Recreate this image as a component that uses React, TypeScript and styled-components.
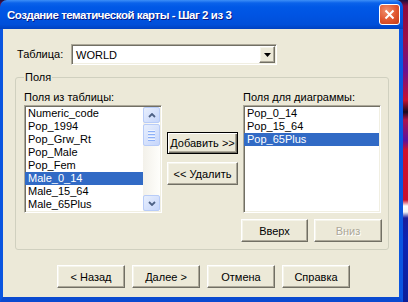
import styled, { createGlobalStyle, css } from "styled-components";

const GlobalStyle = createGlobalStyle`
  html, body {
    margin: 0;
    padding: 0;
  }
  body {
    width: 408px;
    height: 302px;
    overflow: hidden;
    font-family: "Liberation Sans", Arial, sans-serif;
    background: linear-gradient(
      to bottom,
      #1a1040 0px,
      #8a0d3f 6px,
      #9b0f48 40px,
      #6b1190 70px,
      #c8102e 100px,
      #1a0a20 112px,
      #b0124a 120px,
      #5a10a0 140px,
      #d0122c 150px,
      #c8102e 200px,
      #ffffff 206px,
      #f4f4f4 212px,
      #1b1c9a 218px,
      #0a24b5 240px,
      #0a1f9a 302px
    );
  }
`;

const raised = css`
  border: 1px solid;
  border-color: #ffffff #716f64 #716f64 #ffffff;
  box-shadow: inset -1px -1px 0 #aca899, inset 1px 1px 0 #f5f4ea;
`;

const sunken = css`
  border: 1px solid;
  border-color: #aca899 #ffffff #ffffff #aca899;
  box-shadow: inset 1px 1px 0 #716f64, inset -1px -1px 0 #f1efe2;
`;

const Window = styled.div`
  width: 403px;
  height: 302px;
  display: flex;
  flex-direction: column;
`;

const TitleBar = styled.div`
  height: 29px;
  flex: none;
  display: flex;
  align-items: center;
  justify-content: space-between;
  padding: 0 3px 0 7px;
  border-radius: 7px 7px 0 0;
  background: linear-gradient(
    to bottom,
    #3d8ff7 0px,
    #0a62ea 3px,
    #0058e6 7px,
    #0054e3 50%,
    #004fd9 85%,
    #0041c0 100%
  );
`;

const TitleText = styled.span`
  color: #ffffff;
  font-family: "Liberation Sans", Arial, sans-serif;
  font-weight: bold;
  font-size: 11.5px;
  letter-spacing: -0.45px;
  text-shadow: 1px 1px 0 #0a1883;
  padding-top: 1px;
`;

const CloseButton = styled.div`
  width: 21px;
  height: 21px;
  box-sizing: border-box;
  border: 1px solid #ffffff;
  border-radius: 3px;
  background: radial-gradient(circle at 35% 30%, #f0906e 0%, #e0552e 55%, #c43c18 100%);
  display: flex;
  align-items: center;
  justify-content: center;
`;

const Frame = styled.div`
  flex: 1;
  display: flex;
  flex-direction: column;
  background: #ece9d8;
  border-left: 3px solid #0a55e0;
  border-right: 4px solid #0a55e0;
  border-bottom: 5px solid #0a4ad0;
  font-size: 11px;
  color: #000000;
`;

const TableRow = styled.div`
  display: flex;
  align-items: center;
  padding: 15px 0 0 14px;
`;

const Label = styled.span<{ $width?: number }>`
  width: ${({ $width }) => ($width ? `${$width}px` : "auto")};
  line-height: 13px;
  white-space: nowrap;
`;

const Combo = styled.div`
  width: 206px;
  height: 21px;
  box-sizing: border-box;
  ${sunken};
  background: #ffffff;
  display: flex;
  align-items: center;
  justify-content: space-between;
  padding: 0 1px 0 4px;
`;

const ComboArrow = styled.div`
  width: 16px;
  height: 17px;
  box-sizing: border-box;
  ${raised};
  background: #ece9d8;
  display: flex;
  align-items: center;
  justify-content: center;
`;

const Group = styled.fieldset`
  width: 374px;
  box-sizing: border-box;
  margin: 6px 0 0 12px;
  padding: 7px 7px 7px 8px;
  border: 1px solid #d0d0bf;
  border-radius: 3px;
  min-inline-size: 0;
`;

const Legend = styled.legend`
  padding: 0 1px;
  line-height: 13px;
`;

const Columns = styled.div`
  display: grid;
  grid-template-columns: 138px 71px 138px;
  grid-template-rows: 13px 108px;
  column-gap: 5px;
  row-gap: 1px;
`;

const ListBox = styled.div`
  height: 108px;
  box-sizing: border-box;
  ${sunken};
  background: #ffffff;
  display: flex;
  padding: 1px 1px 1px 0;
`;

const Items = styled.div`
  flex: 1;
  overflow: hidden;
`;

const Item = styled.div<{ $selected?: boolean }>`
  height: 13px;
  line-height: 13px;
  padding-left: 3px;
  white-space: nowrap;
  background: ${({ $selected }) => ($selected ? "#316ac5" : "transparent")};
  color: ${({ $selected }) => ($selected ? "#ffffff" : "#000000")};
`;

const ScrollBar = styled.div`
  width: 17px;
  display: flex;
  flex-direction: column;
  background: linear-gradient(to right, #f3f1ea, #fefefb);
`;

const ScrollButton = styled.div<{ $grow?: boolean }>`
  height: ${({ $grow }) => ($grow ? "22px" : "16px")};
  box-sizing: border-box;
  border: 1px solid #b8ccf8;
  border-radius: 2px;
  background: linear-gradient(135deg, #e8effd 0%, #c6d6fb 100%);
  display: flex;
  flex-direction: column;
  align-items: center;
  justify-content: center;
  gap: 1px;
`;

const Track = styled.div`
  flex: 1;
  display: flex;
  flex-direction: column;
  padding-top: 1px;
`;

const Grip = styled.span`
  width: 7px;
  height: 1px;
  background: #eef4fe;
  border-bottom: 1px solid #8cb0f8;
`;

const MiddleColumn = styled.div`
  display: flex;
  flex-direction: column;
  gap: 8px;
  padding-top: 27px;
`;

const Button = styled.button<{ $width?: number; $default?: boolean }>`
  width: ${({ $width }) => $width ?? 67}px;
  height: ${({ $default }) => ($default ? 22 : 23)}px;
  box-sizing: border-box;
  padding: 0;
  margin: 0;
  font-family: "Liberation Sans", Arial, sans-serif;
  font-size: 11px;
  color: #000000;
  background: #ece9d8;
  white-space: nowrap;
  ${({ $default }) =>
    $default
      ? css`
          border: 1px solid #000000;
          box-shadow: inset 1px 1px 0 #ffffff, inset -1px -1px 0 #716f64,
            inset -2px -2px 0 #aca899;
        `
      : raised};
  &:disabled {
    color: #aca899;
    text-shadow: 1px 1px 0 #ffffff;
  }
`;

const MoveRow = styled.div`
  display: flex;
  justify-content: flex-end;
  gap: 6px;
  margin: 6px -1px 0 0;
`;

const FooterRow = styled.div`
  display: flex;
  gap: 7px;
  padding: 15px 0 0 54px;
`;

const sourceFields = [
  "Numeric_code",
  "Pop_1994",
  "Pop_Grw_Rt",
  "Pop_Male",
  "Pop_Fem",
  "Male_0_14",
  "Male_15_64",
  "Male_65Plus",
];
const chartFields = ["Pop_0_14", "Pop_15_64", "Pop_65Plus"];

function Chevron({ up }: { up?: boolean }) {
  return (
    <svg width="8" height="5" viewBox="0 0 8 5">
      <path
        d={up ? "M1 4 L4 1 L7 4" : "M1 1 L4 4 L7 1"}
        fill="none"
        stroke="#4d6185"
        strokeWidth="1.8"
      />
    </svg>
  );
}

export default function App() {
  return (
    <>
      <GlobalStyle />
      <Window>
        <TitleBar>
          <TitleText>Создание тематической карты - Шаг 2 из 3</TitleText>
          <CloseButton>
            <svg width="11" height="11" viewBox="0 0 11 11">
              <path d="M1.5 1.5 L9.5 9.5 M9.5 1.5 L1.5 9.5" stroke="#ffffff" strokeWidth="2" />
            </svg>
          </CloseButton>
        </TitleBar>
        <Frame>
          <TableRow>
            <Label $width={54}>Таблица:</Label>
            <Combo>
              <span>WORLD</span>
              <ComboArrow>
                <svg width="7" height="4" viewBox="0 0 7 4">
                  <path d="M0 0 H7 L3.5 4 Z" fill="#000000" />
                </svg>
              </ComboArrow>
            </Combo>
          </TableRow>
          <Group>
            <Legend>Поля</Legend>
            <Columns>
              <Label>Поля из таблицы:</Label>
              <span />
              <Label>Поля для диаграммы:</Label>
              <ListBox>
                <Items>
                  {sourceFields.map((f) => (
                    <Item key={f} $selected={f === "Male_0_14"}>
                      {f}
                    </Item>
                  ))}
                </Items>
                <ScrollBar>
                  <ScrollButton>
                    <Chevron up />
                  </ScrollButton>
                  <Track>
                    <ScrollButton $grow>
                      <Grip />
                      <Grip />
                      <Grip />
                      <Grip />
                    </ScrollButton>
                  </Track>
                  <ScrollButton>
                    <Chevron />
                  </ScrollButton>
                </ScrollBar>
              </ListBox>
              <MiddleColumn>
                <Button $width={71} $default>
                  Добавить &gt;&gt;
                </Button>
                <Button $width={71}>&lt;&lt; Удалить</Button>
              </MiddleColumn>
              <ListBox>
                <Items>
                  {chartFields.map((f) => (
                    <Item key={f} $selected={f === "Pop_65Plus"}>
                      {f}
                    </Item>
                  ))}
                </Items>
              </ListBox>
            </Columns>
            <MoveRow>
              <Button>Вверх</Button>
              <Button $width={68} disabled>
                Вниз
              </Button>
            </MoveRow>
          </Group>
          <FooterRow>
            <Button $width={68}>&lt; Назад</Button>
            <Button $width={68}>Далее &gt;</Button>
            <Button $width={68}>Отмена</Button>
            <Button $width={68}>Справка</Button>
          </FooterRow>
        </Frame>
      </Window>
    </>
  );
}
